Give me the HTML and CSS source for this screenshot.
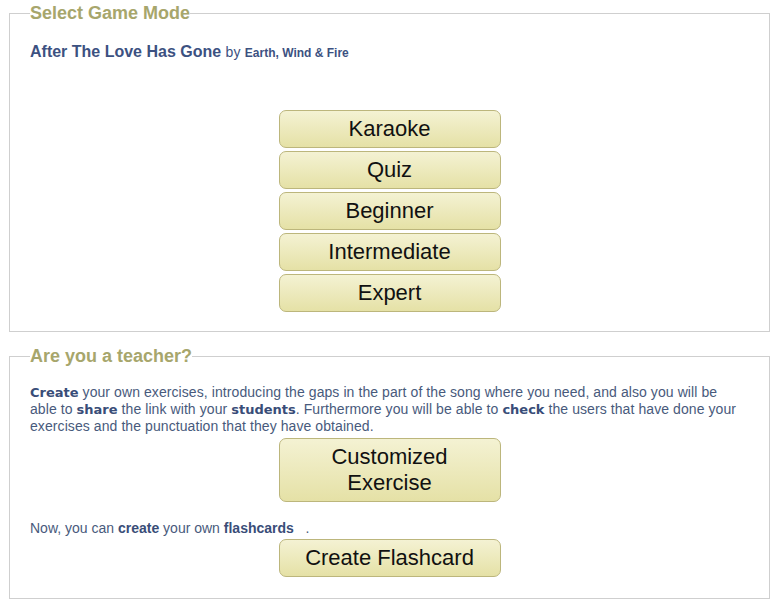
FILE: index.html
```html
<!DOCTYPE html>
<html lang="en">
<head>
  <meta charset="UTF-8">
  <meta name="viewport" content="width=device-width, initial-scale=1.0">
  <title>Select Game Mode</title>
  <link rel="stylesheet" href="styles.css">
</head>
<body>
  <fieldset class="box">
    <legend>Select Game Mode</legend>
    <p class="song">After The Love Has Gone <span class="by">by</span> <span class="artist">Earth, Wind &amp; Fire</span></p>
    <div class="modes">
      <button class="mode">Karaoke</button>
      <button class="mode">Quiz</button>
      <button class="mode">Beginner</button>
      <button class="mode">Intermediate</button>
      <button class="mode">Expert</button>
    </div>
  </fieldset>

  <fieldset class="box teacher">
    <legend>Are you a teacher?</legend>
    <p class="info"><b>Create</b> your own exercises, introducing the gaps in the part of the song where you need, and also you will be able to <b>share</b> the link with your <b>students</b>. Furthermore you will be able to <b>check</b> the users that have done your exercises and the punctuation that they have obtained.</p>
    <div class="modes">
      <button class="mode">Customized<br>Exercise</button>
    </div>
    <p class="info flash">Now, you can <strong>create</strong> your own <strong>flashcards</strong> &nbsp;&nbsp;.</p>
    <div class="modes">
      <button class="mode">Create Flashcard</button>
    </div>
  </fieldset>
</body>
</html>
```

FILE: styles.css
```css
body {
  margin: 0;
  padding: 0 9px;
  background: #fff;
  font-family: "Liberation Sans", Arial, sans-serif;
}
.box {
  margin: 0;
  border: 1px solid #cfcfcf;
  padding: 0 20px 19px;
}
.box legend {
  padding: 0;
  font-size: 18px;
  font-weight: bold;
  line-height: 26px;
  color: #a7a66c;
}
.song {
  margin: 16px 0 0;
  font-size: 16px;
  font-weight: bold;
  color: #3c5181;
  line-height: 20px;
}
.song .by {
  font-size: 14px;
  font-weight: normal;
}
.song .artist {
  font-size: 12px;
}
.box > .song + .modes {
  margin-top: 47px;
}
.modes {
  display: flex;
  flex-direction: column;
  align-items: center;
  gap: 3px;
}
.mode {
  width: 222px;
  padding: 5px 0;
  border: 1px solid #bcb67c;
  border-radius: 7px;
  background: linear-gradient(#f4f2d3, #e5e1a6);
  font-family: "Liberation Sans", Arial, sans-serif;
  font-size: 22px;
  line-height: 26px;
  color: #111;
  cursor: pointer;
}
.mode:hover {
  background: linear-gradient(#ecead0, #dcd895);
}
.teacher {
  margin-top: 11px;
  padding-bottom: 21px;
}
.info {
  margin: 15px 0 3px;
  padding-right: 8px;
  font-size: 14px;
  line-height: 17px;
  letter-spacing: 0.08px;
  color: #485a7c;
}
.info b {
  font-family: "DejaVu Sans", Verdana, sans-serif;
  font-size: 13px;
  line-height: 17px;
  letter-spacing: 0;
  color: #394d78;
}
.info.flash {
  margin: 18px 0 2px;
  letter-spacing: 0;
}
.info strong {
  color: #394d78;
}
```
